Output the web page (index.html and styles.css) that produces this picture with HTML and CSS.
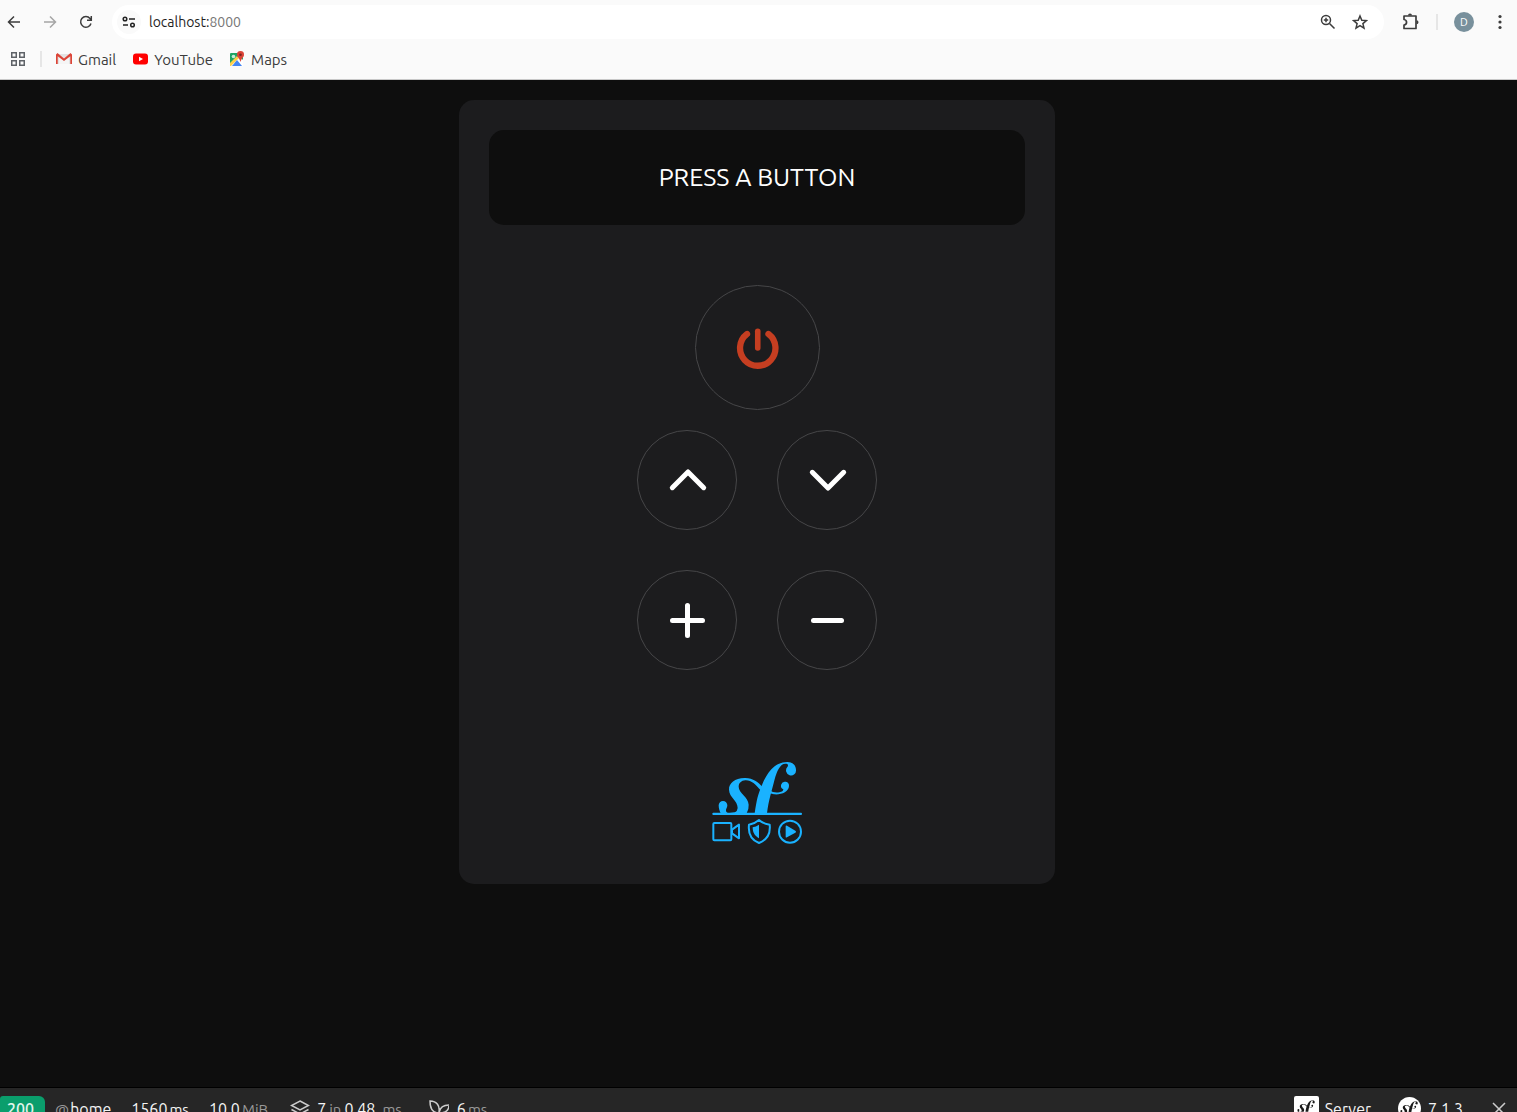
FILE: index.html
```html
<!DOCTYPE html>
<html lang="en">
<head>
<meta charset="utf-8">
<title>Remote</title>
<link rel="stylesheet" href="styles.css">
</head>
<body>
<svg class="sprite" aria-hidden="true">
  <symbol id="sf" viewBox="50 34 242 156">
    <path d="M69 153A13 13 0 0 1 82 166C82 174 77 176 78 183Q80 190 90 190H62C58 182 56 174 56 166A13 13 0 0 1 69 153Z"/>
    <path d="M84 190H140Q147 178 146 164C145 140 116 130 116 110C116 99 124 92 136 91C154 90 166 103 182 121L188 111C174 96 160 85 136 84C106 83 86 99 87 119C88 143 113 151 113 174Q112 184 105 187Z"/>
    <path d="M164 190C170 150 174 132 184 110C198 75 220 36 262 36C278 36 288 46 288 59A15 15 0 1 1 262 51Q266 46 262 42C242 36 231 62 224 88C216 120 206 150 201 190Z"/>
    <path d="M208 121Q222 130 238 127Q250 125 250 118A12 12 0 1 1 267 108C266 126 244 135 222 133Q211 131 205 127Z"/>
  </symbol>
</svg>
<header class="browser">
  <div class="toolbar">
    <button class="icon-button" aria-label="Back"><svg viewBox="0 0 16 16"><path d="M14 8H3M8 2.5 2.5 8 8 13.500"/></svg></button>
    <button class="icon-button faded" aria-label="Forward"><svg viewBox="0 0 16 16"><path d="M2 8h11M8 2.500 13.500 8 8 13.500"/></svg></button>
    <button class="icon-button" aria-label="Reload"><svg viewBox="0 0 16 16"><path d="M13 9.500A5.300 5.300 0 1 1 12 4.500L13 5.500M13.300 2v4.200H9"/></svg></button>
    <div class="address">
      <button class="site-info" aria-label="Site information"><svg viewBox="0 0 16 16"><circle cx="4" cy="5" r="1.800"/><path d="M8 5h6M2 11h5"/><circle cx="11.500" cy="11" r="1.800"/></svg></button>
      <a class="url" href="#">localhost:<span>8000</span></a>
      <button class="icon-button" aria-label="Zoom"><svg viewBox="0 0 16 16"><circle cx="6" cy="6" r="4.500"/><path d="m9.500 9.500 5 5M6 3.800v4.400M3.800 6h4.400"/></svg></button>
      <button class="icon-button" aria-label="Bookmark"><svg viewBox="0 0 16 16"><path d="m8 2 1.800 4.200 4.600.4-3.500 3 1.100 4.500L8 11.700l-4 2.400 1.100-4.500-3.500-3 4.600-.4Z"/></svg></button>
    </div>
    <div class="tools">
      <button class="icon-button large" aria-label="Extensions"><svg viewBox="0 0 18 18"><path class="bold" d="M2 3h12v12.500H2v-3.500c3.400-.5 3.400-5 0-5.500Z"/><path class="solid" d="M6 2.500a2 2 0 0 1 4 0ZM14.500 7.200a2 2 0 0 1 0 4Z"/></svg></button>
      <span class="divider"></span>
      <button class="avatar" aria-label="Profile">D</button>
      <button class="icon-button" aria-label="Menu"><svg viewBox="0 0 16 16"><g class="solid"><circle cx="8" cy="2.500" r="1.600"/><circle cx="8" cy="8" r="1.600"/><circle cx="8" cy="13.500" r="1.600"/></g></svg></button>
    </div>
  </div>
  <nav class="bookmarks" aria-label="Bookmarks">
    <button class="icon-button" aria-label="Apps"><svg viewBox="0 0 16 16"><path d="M1.750 1.750h4.500v4.500h-4.500ZM9.750 1.750h4.500v4.500h-4.500ZM1.750 9.750h4.500v4.500h-4.500ZM9.750 9.750h4.500v4.500h-4.500Z"/></svg></button>
    <span class="divider"></span>
    <a href="#"><svg viewBox="0 0 16 16"><path fill="#e3e3e3" d="M1 3h14v10H1z"/><path fill="#f5f5f5" d="m3 5 5 4 5-4v8H3z"/><path fill="#dc4437" d="M0 3.500 1.500 2 8 7.500 14.500 2 16 3.500V13h-1.700V5.300L8 10 1.700 5.300V13H0Z"/></svg>Gmail</a>
    <a href="#"><svg viewBox="0 0 16 16"><rect x="1" y="2.500" width="15" height="11" rx="3" fill="#f00"/><path fill="#fff" d="m7 5.700 4 2.300-4 2.300z"/></svg>YouTube</a>
    <a href="#"><svg viewBox="0 0 16 16"><rect x="1" y="2" width="13" height="13" rx="1" fill="#1fa463"/><path fill="#fff" d="M1 14 10 5l4 4v6H1z"/><path fill="#ffd04b" d="m1 12 7-7 2 2-8 8H1z"/><path fill="#4285f4" d="m3 15 5-6 5 6z"/><path fill="#db4437" d="M11.500 0A3.700 3.700 0 0 1 15 4c0 2-2.500 3-3.500 7C10.500 7 8 6 8 4a3.700 3.700 0 0 1 3.500-4Z"/><circle cx="11.500" cy="3.700" r="1.300" fill="#7b231e"/><circle cx="4.500" cy="5.500" r="1.800" fill="#c8ecd9"/></svg>Maps</a>
  </nav>
</header>

<main class="page">
  <section class="remote" aria-label="Remote control">
    <h1 class="display">PRESS A BUTTON</h1>
    <button class="key power" aria-label="Power"><svg viewBox="0 0 48 48"><path d="M14 10A17.700 17.700 0 1 0 35.500 10" stroke-width="6.300"/><path d="M24.750 7.300V24" stroke-width="5.600"/></svg></button>
    <div class="keys">
      <button class="key" aria-label="Channel up"><svg viewBox="0 0 48 48"><path d="M9.300 31.700 25 16 40.700 31.700"/></svg></button>
      <button class="key" aria-label="Channel down"><svg viewBox="0 0 48 48"><path d="M9.300 16.300 25 32 40.700 16.300"/></svg></button>
      <button class="key" aria-label="Volume up"><svg viewBox="0 0 48 48"><path d="M9.500 24.500h30M24.500 9.500v30"/></svg></button>
      <button class="key" aria-label="Volume down"><svg viewBox="0 0 48 48"><path d="M10.500 24.500h28"/></svg></button>
    </div>
    <svg class="logo" viewBox="36 36 270 246" role="img" aria-label="Symfony cast logo">
      <use href="#sf" x="50" y="34" width="242" height="156"/>
      <rect x="37" y="188" width="269" height="7" rx="3"/>
      <g class="outline"><rect x="40" y="219" width="54" height="52" rx="3"/><path d="M96 239 117 224V265L96 250ZM177 210C168 218 157 222 147 224C144 250 154 270 177 279C200 270 212 250 209 224C197 222 186 218 177 210Z"/><circle cx="270" cy="245" r="33"/></g>
      <path d="M177 224V265C163 257 158 247 158 232Q168 230 177 224ZM257 229Q257 225 261 227L286 242Q290 245 286 248L261 262Q257 264 257 260Z"/>
    </svg>
  </section>
</main>

<footer class="debug">
  <a class="status" href="#">200</a>
  <a class="route" href="#"><small>@</small>home</a>
  <a class="time" href="#">1560<small class="bright">ms</small></a>
  <a class="memory" href="#">10.0<small>MiB</small></a>
  <a class="cache" href="#"><svg viewBox="0 0 20 24"><path d="m10 5 8.500 4.500L10 14 1.500 9.500ZM1.500 13.500 10 18l8.500-4.500M1.500 17.500 10 22l8.500-4.500"/></svg>7<small>in</small>0.48<small class="unit">ms</small></a>
  <a class="twig" href="#"><svg viewBox="0 0 20 24"><path d="M10 22V17C3 17 1 12 1 5C8 5 11 10 10 16M10 19C10 12 14 9 20 9C20 15 16 17 10 17"/></svg>6<small>ms</small></a>
  <span class="right">
    <a href="#"><svg class="server" viewBox="0 0 25 25"><rect width="25" height="25" rx="2" fill="#fff"/><use href="#sf" x="3" y="3" width="18" height="14"/></svg>Server</a>
    <a href="#"><svg class="server" viewBox="0 0 25 25"><circle cx="12.500" cy="12.500" r="11.500" fill="#fff"/><use href="#sf" x="3" y="4" width="18" height="14"/></svg>7.1.3</a>
    <button class="close" aria-label="Close toolbar"><svg viewBox="0 0 16 16"><path d="m2 2 12 12M14 2 2 14"/></svg></button>
  </span>
</footer>
</body>
</html>
```
FILE: styles.css
```css
* { box-sizing: border-box; }
body {
  margin: 0;
  height: 100vh;
  overflow: hidden;
  display: grid;
  grid-template-rows: auto 1fr 24px;
  background: #0e0e0e;
  font-family: Ubuntu, "Noto Sans", sans-serif;
}
button { padding: 0; border: 0; background: none; color: inherit; font: inherit; cursor: pointer; }
a { color: inherit; text-decoration: none; }
svg { display: block; flex: none; }
.sprite { position: absolute; width: 0; height: 0; }

.browser { height: 80px; background: #fafafa; border-bottom: 1px solid #c8c8c8; color: #3c3c3c; }
.toolbar { display: flex; align-items: center; padding: 5px 9px 0 6px; }
.icon-button { width: 16px; height: 16px; margin-right: 20px; flex: none; }
.icon-button svg { width: 16px; height: 16px; fill: none; stroke: currentColor; stroke-width: 1.5; }
.icon-button.large, .icon-button.large svg { width: 18px; height: 18px; }
.icon-button .bold { stroke-width: 1.7; stroke-linejoin: round; }
.icon-button .solid { fill: currentColor; stroke: none; }
.faded { color: #a5a5a5; }
.address { flex: 1; display: flex; align-items: center; height: 34px; padding: 0 16px 0 5px; border-radius: 17px; background: #fff; margin-left: -2px; }
.address .icon-button { margin: 0 0 0 16px; }
.site-info { width: 24px; height: 24px; display: grid; place-items: center; border-radius: 50%; background: #fafafa; color: #222; }
.site-info svg { width: 16px; height: 16px; fill: none; stroke: currentColor; stroke-width: 1.5; }
.url { flex: 1; margin-left: 8px; font-size: 14px; color: #1f1f1f; }
.url span { color: #777; }
.tools { display: flex; align-items: center; gap: 16px; padding-left: 18px; }
.tools .icon-button { margin: 0; }
.divider { width: 2px; height: 16px; background: #e6e6e6; }
.avatar { width: 20px; height: 20px; border-radius: 50%; background: #78909c; color: #fff; font-size: 11px; line-height: 20px; }
.tools .avatar + .icon-button { margin-left: 2px; }
.bookmarks { display: flex; align-items: center; height: 40px; padding: 0 10px; gap: 16px; font-size: 15px; }
.bookmarks .icon-button { margin: 0 -2px 0 0; color: #5f6368; }
.bookmarks .divider { margin-right: -2px; }
.bookmarks a { display: flex; align-items: center; gap: 6px; }
.bookmarks a svg { width: 16px; height: 16px; }

.page { display: grid; justify-content: center; align-content: start; padding: 20px 23px 20px 20px; }
.remote { width: 596px; max-width: 100%; padding: 30px 30px 40px; display: flex; flex-direction: column; align-items: center; border-radius: 15px; background: #1c1c1e; color: #fff; }
.display { align-self: stretch; margin: 0 0 60px; padding: 30px; border-radius: 15px; background: #0e0e0e; font-size: 25px; line-height: 35px; font-weight: 400; text-align: center; }
.key { width: 100px; height: 100px; display: grid; place-items: center; border: 1px solid #464648; border-radius: 50%; }
.key svg { width: 48px; height: 48px; fill: none; stroke: currentColor; stroke-width: 5; stroke-linecap: round; stroke-linejoin: round; }
.power { width: 125px; height: 125px; margin-bottom: 20px; color: #c53e21; }
.keys { display: grid; grid-template-columns: auto auto; gap: 40px; margin-bottom: 92px; }
.logo { width: 90px; height: 82px; fill: #1ab2ff; }
.logo .outline { fill: none; stroke: #1ab2ff; stroke-width: 6; stroke-linejoin: round; }

.debug { display: flex; align-items: flex-start; padding-top: 8px; overflow: hidden; background: #262626; box-shadow: 0 -1px 0 #000; color: #f5f5f5; font-size: 16px; line-height: 26px; white-space: nowrap; }
.debug a { display: flex; align-items: baseline; }
.debug svg { width: 20px; height: 24px; fill: none; stroke: #ccc; stroke-width: 1.5; align-self: flex-start; }
.debug small { font-size: 15px; color: #999; }
.debug small.bright { color: #f5f5f5; margin-left: 2px; }
.debug .status { width: 45px; height: 30px; justify-content: center; border-radius: 3px 6px 0 0; padding-right: 4px; background: #0a9e6c; color: #e0f5ec; font-weight: 500; }
.debug .route { margin-left: 10px; gap: 1px; }
.debug .time, .debug .memory { margin-left: 20px; }
.debug .memory small { margin-left: 2px; }
.debug .cache { margin-left: 22px; gap: 3px; }
.debug .cache svg { margin-right: 4px; }
.debug .twig svg { margin-right: 6px; }
.debug .cache .unit { margin-left: 4px; }
.debug .twig { margin-left: 27px; gap: 2px; }
.right { display: flex; gap: 26px; margin-left: auto; padding-right: 10px; }
.right a { gap: 6px; }
.right a:last-of-type { margin-right: 2px; }
.debug .server { width: 25px; height: 25px; fill: #1a1a1a; stroke: none; }
.close { height: 26px; display: grid; place-items: center; }
.debug .close svg { width: 16px; height: 16px; align-self: center; }
```
